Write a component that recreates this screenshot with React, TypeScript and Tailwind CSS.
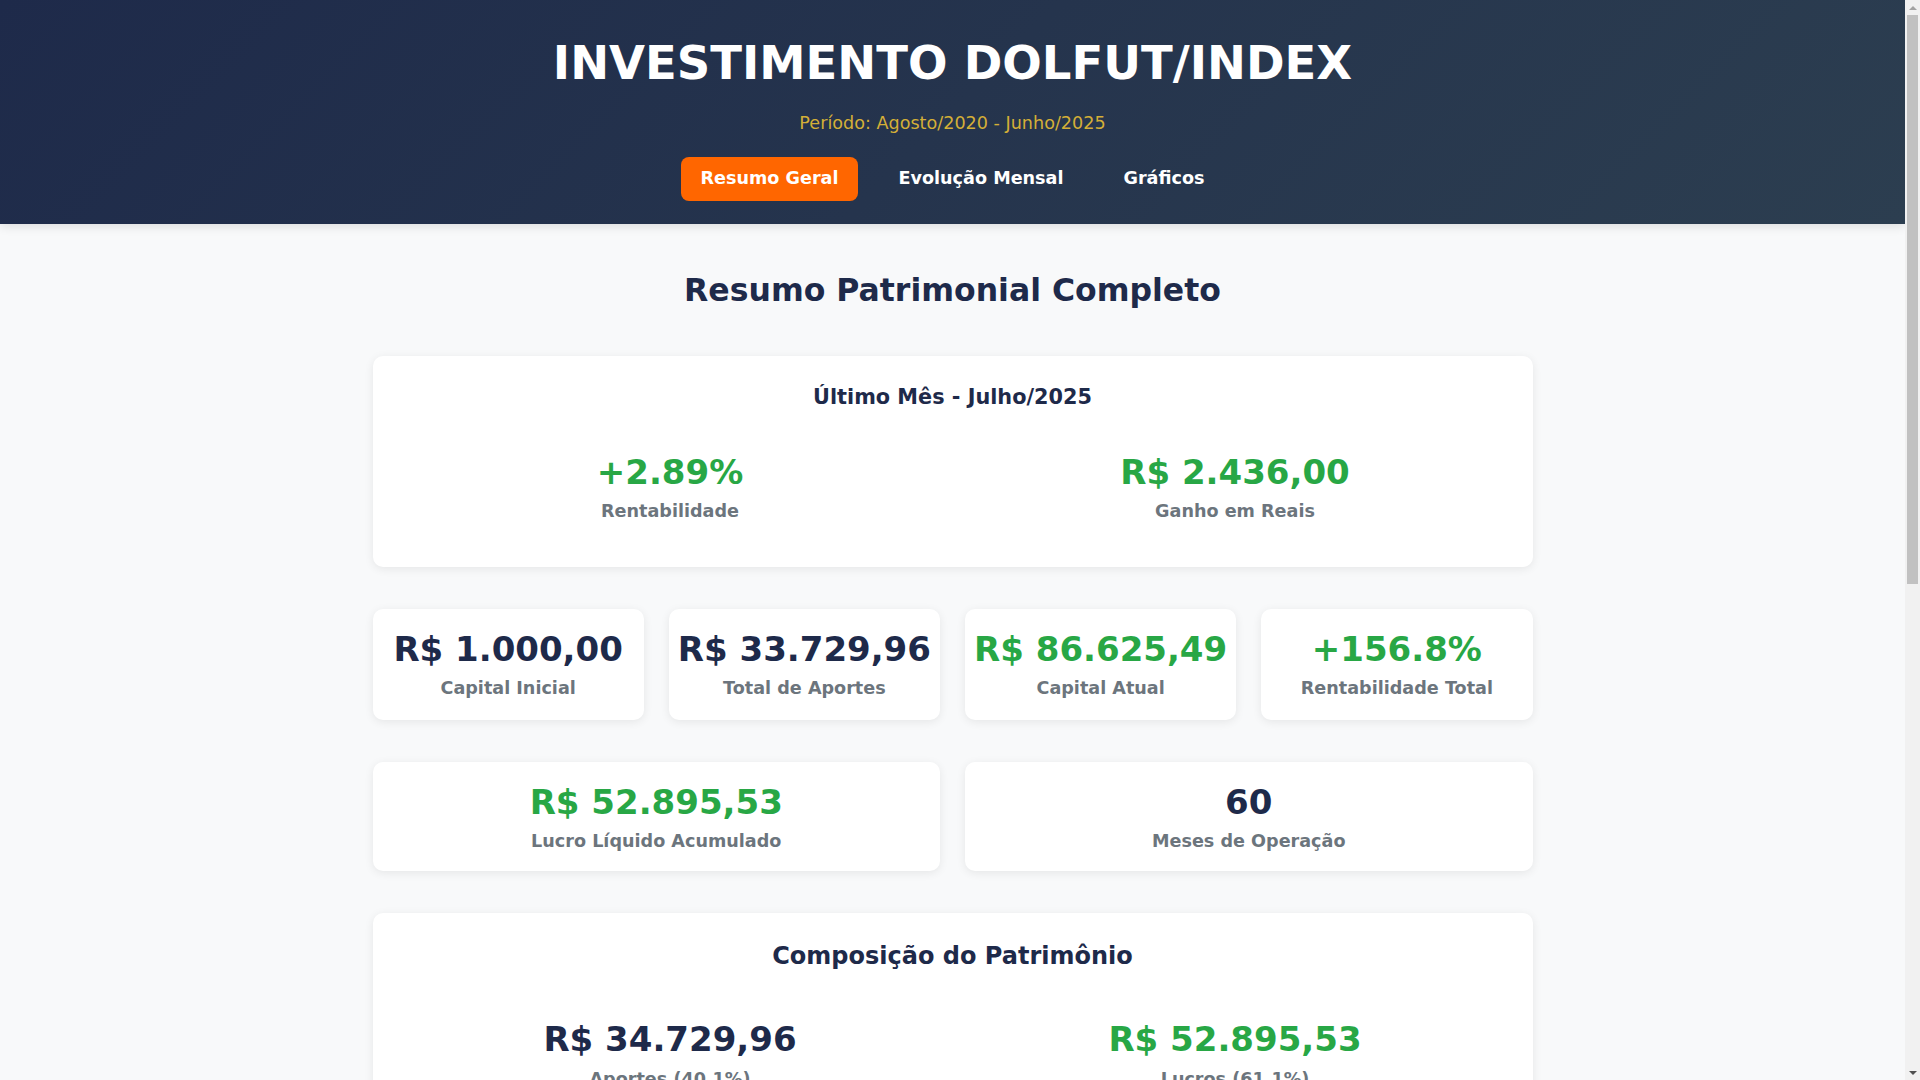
import { useState } from 'react'

const tabs = ['Resumo Geral', 'Evolução Mensal', 'Gráficos']

const stats = [
  { value: 'R$ 1.000,00', label: 'Capital Inicial', green: false },
  { value: 'R$ 33.729,96', label: 'Total de Aportes', green: false },
  { value: 'R$ 86.625,49', label: 'Capital Atual', green: true },
  { value: '+156.8%', label: 'Rentabilidade Total', green: true },
]

const extras = [
  { value: 'R$ 52.895,53', label: 'Lucro Líquido Acumulado', green: true },
  { value: '60', label: 'Meses de Operação', green: false },
]

function Metric({ value, label, green, gap = 'mb-[9px]' }: { value: string; label: string; green: boolean; gap?: string }) {
  return (
    <>
      <div
        className={`text-[34px] font-bold leading-[1.2] whitespace-nowrap ${gap} ${
          green ? 'text-[#28a745]' : 'text-[#1e2a4a]'
        }`}
      >
        {value}
      </div>
      <div className="text-[17.6px] font-bold leading-[1.2] text-[#6c757d] whitespace-nowrap">{label}</div>
    </>
  )
}

function StatCard({ compact, ...props }: { value: string; label: string; green: boolean; compact?: boolean }) {
  return (
    <div
      className={`bg-white rounded-[10px] pt-[20px] px-[20px] flex flex-col items-center text-center shadow-[0_2px_10px_rgba(0,0,0,0.08)] ${
        compact ? 'pb-[19px]' : 'pb-[21px]'
      }`}
    >
      <Metric {...props} gap={compact ? 'mb-[8px]' : 'mb-[9px]'} />
    </div>
  )
}

// browser scrollbar as it shows in the capture
function Scrollbar() {
  return (
    <div className="fixed top-0 right-0 w-[15px] h-screen bg-[#f1f1f1] flex flex-col items-center">
      <div className="h-[15px] flex items-center justify-center">
        <div className="w-0 h-0 border-x-[4px] border-x-transparent border-b-[4px] border-b-[#a3a3a3]" />
      </div>
      <div className="w-[11px] h-[569px] bg-[#c1c1c1]" />
      <div className="flex-1" />
      <div className="h-[15px] flex items-center justify-center">
        <div className="w-0 h-0 border-x-[4px] border-x-transparent border-t-[4px] border-t-[#505050]" />
      </div>
    </div>
  )
}

export default function App() {
  const [active, setActive] = useState(0)

  return (
    <div className="min-h-screen bg-[#f8f9fa] pr-[15px] font-['DejaVu_Sans',sans-serif]">
      <header className="bg-[linear-gradient(135deg,#1e2a4a_0%,#2c3e50_100%)] pt-[36px] pb-[23px] text-center shadow-[0_2px_10px_rgba(0,0,0,0.12)]">
        <h1 className="text-[46.5px] font-bold leading-[1.2] text-white mb-[21px]">INVESTIMENTO DOLFUT/INDEX</h1>
        <p className="text-[17.6px] leading-[1.2] text-[#d4af37]">Período: Agosto/2020 - Junho/2025</p>
        <nav className="mt-[23px] flex justify-center gap-[20px]">
          {tabs.map((t, i) => (
            <button
              key={t}
              onClick={() => setActive(i)}
              className={`h-[44px] px-[20px] rounded-[8px] text-[17.6px] font-bold leading-[1.2] text-white ${
                active === i ? 'bg-[#ff6600]' : 'bg-transparent'
              }`}
            >
              {t}
            </button>
          ))}
        </nav>
      </header>

      <main className="max-w-[1160px] mx-auto pt-[48px] pb-[40px]">
        <h2 className="text-[31.5px] font-bold leading-[1.2] text-[#1e2a4a] text-center mb-[46px]">
          Resumo Patrimonial Completo
        </h2>

        <section className="bg-white rounded-[10px] pt-[29px] pb-[24px] px-[25px] shadow-[0_2px_10px_rgba(0,0,0,0.08)] mb-[42px]">
          <h3 className="text-[20.8px] font-bold leading-[1.2] text-[#1e2a4a] text-center mb-[22px]">
            Último Mês - Julho/2025
          </h3>
          <div className="grid grid-cols-2 gap-[20px]">
            <div className="py-[20px] text-center">
              <Metric value="+2.89%" label="Rentabilidade" green />
            </div>
            <div className="py-[20px] text-center">
              <Metric value="R$ 2.436,00" label="Ganho em Reais" green />
            </div>
          </div>
        </section>

        <div className="grid grid-cols-4 gap-[25px] mb-[42px]">
          {stats.map((s) => (
            <StatCard key={s.label} {...s} />
          ))}
        </div>

        <div className="grid grid-cols-2 gap-[25px] mb-[42px]">
          {extras.map((s) => (
            <StatCard key={s.label} {...s} compact />
          ))}
        </div>

        <section className="bg-white rounded-[10px] pt-[29px] pb-[25px] px-[25px] shadow-[0_2px_10px_rgba(0,0,0,0.08)] mb-[42px]">
          <h3 className="text-[24px] font-bold leading-[1.2] text-[#1e2a4a] text-center mb-[28px]">
            Composição do Patrimônio
          </h3>
          <div className="grid grid-cols-2 gap-[20px]">
            <div className="py-[20px] text-center">
              <Metric value="R$ 34.729,96" label="Aportes (40.1%)" green={false} />
            </div>
            <div className="py-[20px] text-center">
              <Metric value="R$ 52.895,53" label="Lucros (61.1%)" green />
            </div>
          </div>
        </section>

        <section className="bg-white rounded-[10px] pt-[29px] pb-[25px] px-[25px] shadow-[0_2px_10px_rgba(0,0,0,0.08)] h-[700px]">
          <h3 className="text-[24px] font-bold leading-[1.2] text-[#1e2a4a] text-center">Indicadores</h3>
        </section>
      </main>

      <Scrollbar />
    </div>
  )
}
